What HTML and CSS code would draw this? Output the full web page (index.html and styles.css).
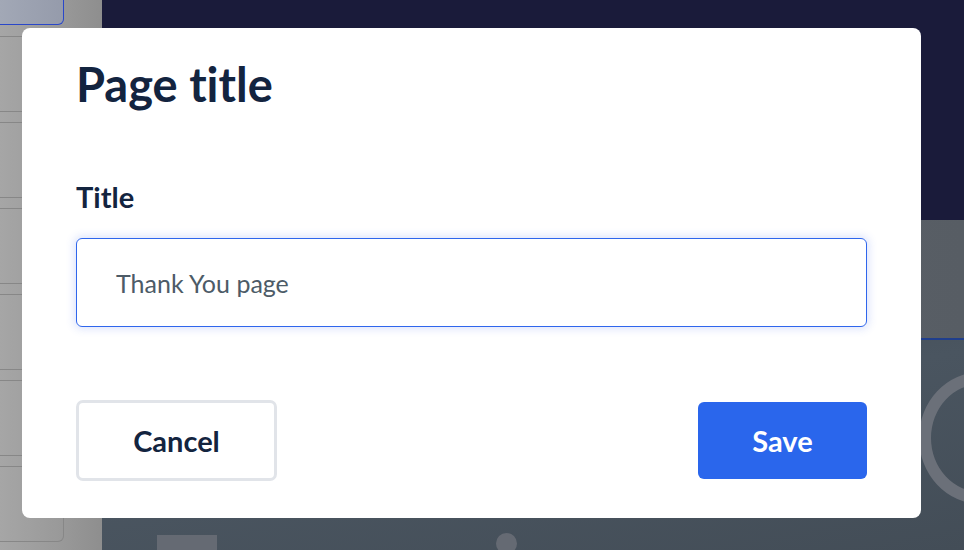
FILE: index.html
```html
<!DOCTYPE html>
<html lang="en">
<head>
<meta charset="utf-8">
<title>Page title</title>
<link rel="stylesheet" href="styles.css">
</head>
<body>
<div class="app">
  <aside class="sidebar">
    <div class="card card-active"></div>
    <div class="card"></div>
    <div class="card"></div>
    <div class="card"></div>
    <div class="card"></div>
    <div class="card"></div>
    <div class="card"></div>
    <div class="card"></div>
  </aside>
  <main class="main">
    <section class="hero"></section>
    <section class="band"></section>
    <section class="lower">
      <div class="ring"></div>
      <div class="shapes">
        <div class="block"></div>
        <div class="dot"></div>
      </div>
    </section>
  </main>
</div>

<div class="overlay">
  <div class="modal" role="dialog" aria-labelledby="modal-title">
    <h1 class="modal-title" id="modal-title">Page title</h1>
    <label class="field-label" for="title-input">Title</label>
    <div class="input">
      <span id="title-input" class="input-value">Thank You page</span>
    </div>
    <div class="actions">
      <button class="btn btn-secondary">Cancel</button>
      <button class="btn btn-primary">Save</button>
    </div>
  </div>
</div>
</body>
</html>
```
FILE: styles.css
```css
* { box-sizing: border-box; }

html, body {
  margin: 0;
  padding: 0;
  width: 964px;
  height: 550px;
  overflow: hidden;
  font-family: "Lato", "Noto Sans", sans-serif;
  font-variant-ligatures: none;
}

.app {
  display: flex;
  width: 964px;
  height: 550px;
}

/* Sidebar (dimmed by backdrop) */
.sidebar {
  width: 102px;
  flex: none;
  display: flex;
  flex-direction: column;
  gap: 10px;
  background: linear-gradient(90deg, #a6a6a6 0%, #999 60%, #8e8e8e 100%);
  overflow: hidden;
}

.card {
  width: 64px;
  height: 76px;
  flex: none;
  border: 1px solid #878787;
  border-left: none;
  border-radius: 0 6px 6px 0;
}

.card-active {
  height: 40px;
  margin-top: -15px;
  margin-bottom: 1px;
  border: 1px solid #2a47c9;
  border-left: none;
  background: linear-gradient(90deg, #a2a8b6, #959bab);
}

/* Main canvas (dimmed) */
.main {
  flex: 1;
  display: flex;
  flex-direction: column;
}

.hero {
  height: 220px;
  background: #1a1b3a;
}

.band {
  height: 120px;
  background: linear-gradient(90deg, #666b71 0%, #5b6168 60%, #575d64 100%);
  border-bottom: 2px solid #1f3e8c;
}

.lower {
  flex: 1;
  position: relative;
  overflow: hidden;
  background: linear-gradient(170deg, #3f4953 0%, #4a5560 45%, #434d57 100%);
}

.ring {
  position: absolute;
  left: 817px;
  top: 32px;
  width: 124px;
  height: 132px;
  border-radius: 50%;
  border: 12px solid #6b7079;
}

.shapes {
  position: absolute;
  left: 55px;
  top: 195px;
  display: flex;
  align-items: flex-start;
  gap: 279px;
}

.block {
  width: 60px;
  height: 30px;
  background: #656a73;
}

.dot {
  width: 21px;
  height: 21px;
  margin-top: -2px;
  border-radius: 50%;
  background: #656a73;
}

/* Modal */
.overlay {
  position: fixed;
  inset: 0;
}

.modal {
  position: absolute;
  left: 22px;
  top: 28px;
  width: 899px;
  height: 490px;
  background: #fff;
  border-radius: 8px;
  padding: 0 54px;
  display: flex;
  flex-direction: column;
}

.modal-title {
  margin: 26px 0 0;
  font-size: 47px;
  line-height: 60px;
  font-weight: 700;
  color: #13243f;
  letter-spacing: 0;
}

.field-label {
  margin-top: 67px;
  font-size: 29px;
  line-height: 32px;
  font-weight: 700;
  color: #13243f;
}

.input {
  margin-top: 25px;
  height: 89px;
  border: 1px solid #2f66ec;
  border-radius: 6px;
  box-shadow: 0 0 8px 2px rgba(60, 100, 240, 0.18);
  display: flex;
  align-items: center;
  padding: 0 39px;
}

.input-value {
  font-size: 25px;
  color: #4d5b67;
}

.actions {
  margin-top: 73px;
  display: flex;
  justify-content: space-between;
  align-items: center;
}

.btn {
  font-family: "Lato", "Noto Sans", sans-serif;
  font-weight: 700;
  font-size: 29px;
  border-radius: 7px;
  cursor: pointer;
  padding: 0;
}

.btn-secondary {
  width: 201px;
  height: 81px;
  background: #fff;
  color: #13243f;
  border: 3px solid #e1e4e9;
}

.btn-primary {
  width: 169px;
  height: 77px;
  background: #2a66ec;
  color: #fff;
  border: none;
  border-radius: 6px;
}
```
